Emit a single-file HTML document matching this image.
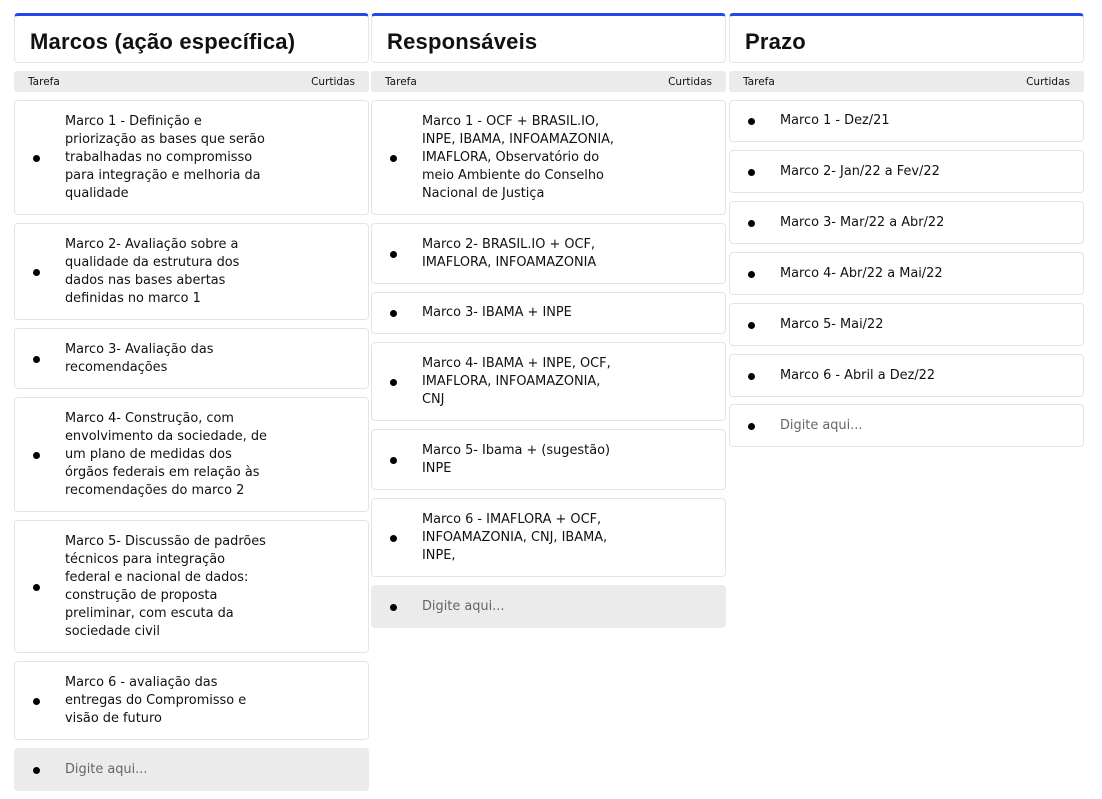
<!DOCTYPE html>
<html><head><meta charset="utf-8"><style>
body{margin:0;background:#fff;font-family:"DejaVu Sans","Liberation Sans",sans-serif;color:#111;}
.col{position:absolute;top:13px;width:355px;}
.hd{border:1px solid #e6e6e6;border-top:3px solid #2546e8;border-radius:4px;box-sizing:border-box;height:50px;font-family:"Liberation Sans",sans-serif;font-weight:bold;font-size:22px;letter-spacing:0.2px;padding:13px 0 0 15px;}
.bar{margin-top:8px;height:21px;background:#ebebeb;border-radius:3px;font-size:10.5px;display:flex;justify-content:space-between;align-items:center;padding:0 14px;}
.card{position:absolute;left:0;width:355px;box-sizing:border-box;border:1px solid #e4e4e4;border-radius:4px;display:flex;align-items:center;font-size:12.9px;line-height:18px;white-space:nowrap;}
.card:before{content:"";width:7px;height:7px;border-radius:50%;background:#000;position:absolute;left:18px;top:50%;margin-top:-3px;}
.card span{margin-left:50px;}
.inp{background:#ebebeb;border-color:#ebebeb;color:#666;}
</style></head><body>
<div class="col" style="left:14px">
<div class="hd">Marcos (ação específica)</div>
<div class="bar"><span>Tarefa</span><span>Curtidas</span></div>
<div class="card" style="top:87px;height:115px"><span>Marco 1 - Definição e<br>priorização as bases que serão<br>trabalhadas no compromisso<br>para integração e melhoria da<br>qualidade</span></div>
<div class="card" style="top:210px;height:97px"><span>Marco 2- Avaliação sobre a<br>qualidade da estrutura dos<br>dados nas bases abertas<br>definidas no marco 1</span></div>
<div class="card" style="top:315px;height:61px"><span>Marco 3- Avaliação das<br>recomendações</span></div>
<div class="card" style="top:384px;height:115px"><span>Marco 4- Construção, com<br>envolvimento da sociedade, de<br>um plano de medidas dos<br>órgãos federais em relação às<br>recomendações do marco 2</span></div>
<div class="card" style="top:507px;height:133px"><span>Marco 5- Discussão de padrões<br>técnicos para integração<br>federal e nacional de dados:<br>construção de proposta<br>preliminar, com escuta da<br>sociedade civil</span></div>
<div class="card" style="top:648px;height:79px"><span>Marco 6 - avaliação das<br>entregas do Compromisso e<br>visão de futuro</span></div>
<div class="card inp" style="top:735px;height:43px"><span>Digite aqui...</span></div>
</div>
<div class="col" style="left:371px">
<div class="hd">Responsáveis</div>
<div class="bar"><span>Tarefa</span><span>Curtidas</span></div>
<div class="card" style="top:87px;height:115px"><span>Marco 1 - OCF + BRASIL.IO,<br>INPE, IBAMA, INFOAMAZONIA,<br>IMAFLORA, Observatório do<br>meio Ambiente do Conselho<br>Nacional de Justiça</span></div>
<div class="card" style="top:210px;height:61px"><span>Marco 2- BRASIL.IO + OCF,<br>IMAFLORA, INFOAMAZONIA</span></div>
<div class="card" style="top:279px;height:42px"><span>Marco 3- IBAMA + INPE</span></div>
<div class="card" style="top:329px;height:79px"><span>Marco 4- IBAMA + INPE, OCF,<br>IMAFLORA, INFOAMAZONIA,<br>CNJ</span></div>
<div class="card" style="top:416px;height:61px"><span>Marco 5- Ibama + (sugestão)<br>INPE</span></div>
<div class="card" style="top:485px;height:79px"><span>Marco 6 - IMAFLORA + OCF,<br>INFOAMAZONIA, CNJ, IBAMA,<br>INPE,</span></div>
<div class="card inp" style="top:572px;height:43px"><span>Digite aqui...</span></div>
</div>
<div class="col" style="left:729px">
<div class="hd">Prazo</div>
<div class="bar"><span>Tarefa</span><span>Curtidas</span></div>
<div class="card" style="top:87px;height:42px"><span>Marco 1 - Dez/21</span></div>
<div class="card" style="top:137px;height:43px"><span>Marco 2- Jan/22 a Fev/22</span></div>
<div class="card" style="top:188px;height:43px"><span>Marco 3- Mar/22 a Abr/22</span></div>
<div class="card" style="top:239px;height:43px"><span>Marco 4- Abr/22 a Mai/22</span></div>
<div class="card" style="top:290px;height:43px"><span>Marco 5- Mai/22</span></div>
<div class="card" style="top:341px;height:43px"><span>Marco 6 - Abril a Dez/22</span></div>
<div class="card" style="top:391px;height:43px;color:#666"><span>Digite aqui...</span></div>
</div>
</body></html>
